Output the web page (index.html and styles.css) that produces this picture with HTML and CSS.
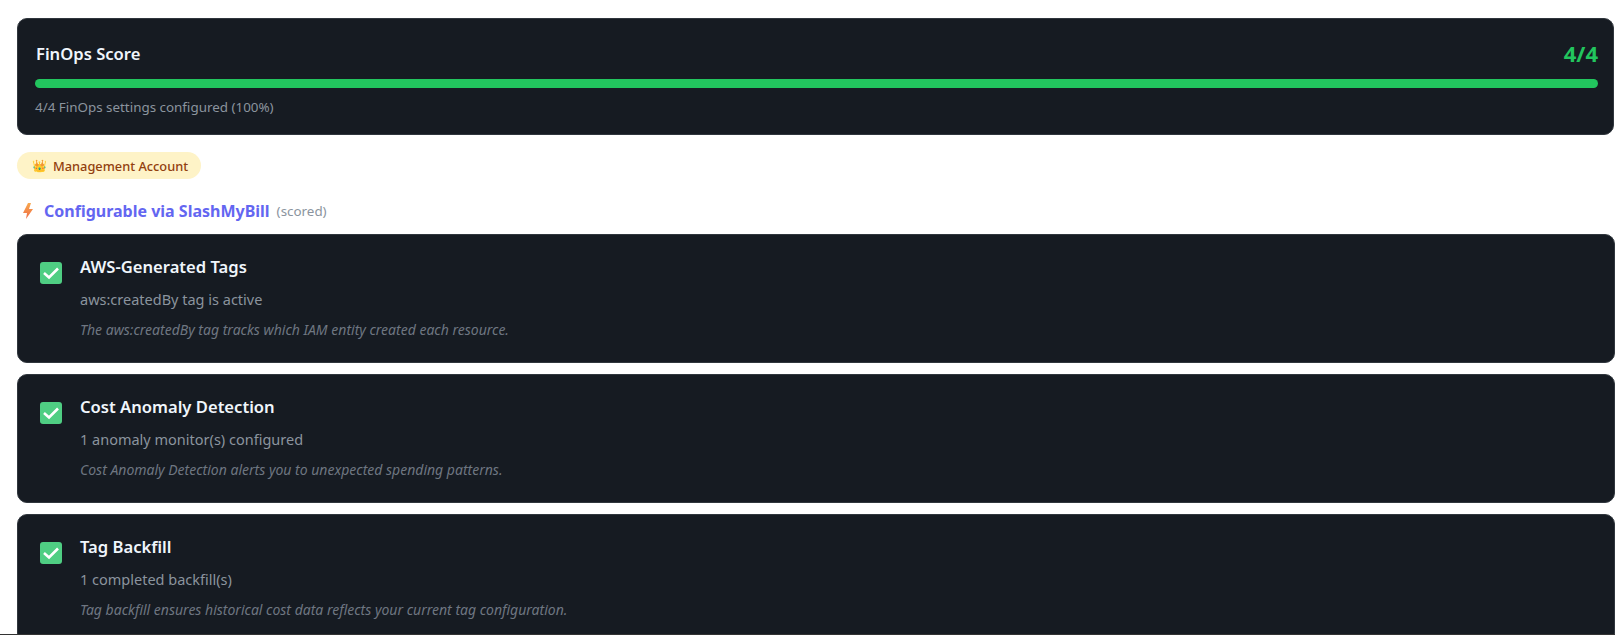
FILE: index.html
```html
<!DOCTYPE html>
<html lang="en">
<head>
<meta charset="utf-8">
<title>FinOps Score</title>
<link rel="stylesheet" href="styles.css">
</head>
<body>
<main class="page">
  <section class="card score">
    <div class="score-head">
      <h2 class="score-title">FinOps Score</h2>
      <span class="score-value">4/4</span>
    </div>
    <div class="bar"><div class="bar-fill" style="width:100%"></div></div>
    <p class="score-note">4/4 FinOps settings configured (100%)</p>
  </section>

  <div class="badge"><span class="badge-icon">👑</span>Management Account</div>

  <h3 class="section-title">
    <svg class="bolt" viewBox="0 0 12 18" width="12" height="18" aria-hidden="true"><defs><linearGradient id="b" x1="0" y1="0" x2="0" y2="1"><stop offset="0" stop-color="#f8a94e"/><stop offset="1" stop-color="#ee6a45"/></linearGradient></defs><path d="M7 1 2 11h4L5 17l7-10H8l2-6z" fill="url(#b)"/></svg>
    <span class="section-name">Configurable via SlashMyBill</span>
    <span class="section-tag">(scored)</span>
  </h3>

  <div class="list">
    <article class="card item">
      <span class="check"><svg viewBox="0 0 22 22" width="22" height="22" aria-hidden="true"><path d="M4 11 9 15.5 18 6.5" fill="none" stroke="#fff" stroke-width="2.6"/></svg></span>
      <div class="item-body">
        <h4 class="item-title">AWS-Generated Tags</h4>
        <p class="item-status">aws:createdBy tag is active</p>
        <p class="item-note">The aws:createdBy tag tracks which IAM entity created each resource.</p>
      </div>
    </article>
    <article class="card item">
      <span class="check"><svg viewBox="0 0 22 22" width="22" height="22" aria-hidden="true"><path d="M4 11 9 15.5 18 6.5" fill="none" stroke="#fff" stroke-width="2.6"/></svg></span>
      <div class="item-body">
        <h4 class="item-title">Cost Anomaly Detection</h4>
        <p class="item-status">1 anomaly monitor(s) configured</p>
        <p class="item-note">Cost Anomaly Detection alerts you to unexpected spending patterns.</p>
      </div>
    </article>
    <article class="card item">
      <span class="check"><svg viewBox="0 0 22 22" width="22" height="22" aria-hidden="true"><path d="M4 11 9 15.5 18 6.5" fill="none" stroke="#fff" stroke-width="2.6"/></svg></span>
      <div class="item-body">
        <h4 class="item-title">Tag Backfill</h4>
        <p class="item-status">1 completed backfill(s)</p>
        <p class="item-note">Tag backfill ensures historical cost data reflects your current tag configuration.</p>
      </div>
    </article>
  </div>
</main>
<div class="edge"></div>
</body>
</html>
```
FILE: styles.css
```css
html, body { margin: 0; height: 635px; overflow: hidden; background: #fff; }
body { font-family: "Noto Sans", sans-serif; color: #f0f6fc; }
h2, h3, h4, p { margin: 0; }
.page { padding: 18px 0 0 17px; }
.card {
  background: #161b22;
  border: 1px solid #30363d;
  border-radius: 10px;
  box-sizing: border-box;
}
.score { height: 117px; padding: 14px 15px 0 17px; margin-right: 1px; }
.score-head { display: flex; justify-content: space-between; align-items: center; height: 41px; }
.score-title { font-size: 16.6px; font-weight: 600; line-height: 35px; height: 35px; margin-left: 1px; }
.score-value { font-size: 22px; font-weight: 700; color: #22c55e; line-height: 35px; height: 35px; }
.bar { height: 9px; background: #22c55e; border-radius: 5px; overflow: hidden; margin-top: 5px; }
.bar-fill { height: 100%; background: #22c55e; }
.score-note { font-size: 13.4px; color: #8b949e; line-height: 18px; margin-top: 10px; }
.badge {
  display: inline-flex; align-items: center;
  margin-top: 17px; height: 27px; padding: 0 13px 0 15px;
  border-radius: 14px; background: #fef3c7; color: #92400e;
  font-size: 12.8px; font-weight: 500;
}
.badge-icon { font-size: 12px; margin-right: 6px; }
.section-title { display: flex; align-items: center; margin-top: 19px; height: 26px; font-size: 16px; font-weight: 700; }
.bolt { margin: 0 11px 0 4px; }
.section-name { color: #6366f1; }
.section-tag { color: #8b949e; font-size: 13.4px; font-weight: 400; margin-left: 7px; }
.list { display: flex; flex-direction: column; gap: 11px; margin-top: 10px; }
.item { height: 129px; display: flex; padding: 27px 22px 0; gap: 18px; flex: none; }
.check { width: 22px; height: 22px; flex: none; border-radius: 3px; background: #4fce83; display: block; }
.check svg { display: block; }
.item-title { font-size: 16.6px; font-weight: 600; line-height: 22px; margin-top: -6px; }
.item-status { font-size: 14.5px; color: #8b949e; line-height: 20px; margin-top: 11px; }
.item-note { font-size: 14px; font-style: italic; color: #6e7681; line-height: 17px; margin-top: 12px; }
.edge { position: fixed; left: 0; right: 0; bottom: 0; height: 1px; background: #333; }
```
